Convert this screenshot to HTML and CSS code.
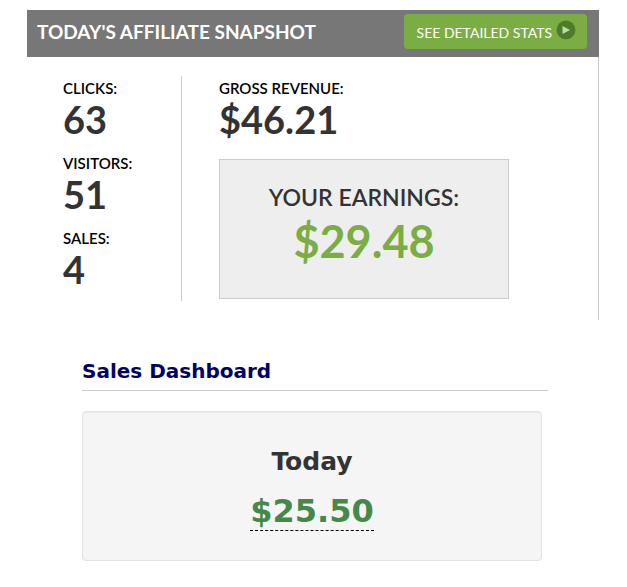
FILE: index.html
```html
<!DOCTYPE html>
<html lang="en">
<head>
  <meta charset="UTF-8" />
  <meta name="viewport" content="width=device-width, initial-scale=1.0"/>
  <title>Affiliate Snapshot</title>
  <link rel="stylesheet" href="styles.css">
</head>
<body>
  <div class="snapshot">
    <div class="snapshot-header">
      <h1>TODAY'S AFFILIATE SNAPSHOT</h1>
      <a href="#" class="stats-btn">
        <span>SEE DETAILED STATS</span>
        <svg class="play" width="20" height="20" viewBox="0 0 20 20" aria-hidden="true">
          <circle cx="10" cy="10.8" r="9" fill="#95be6c"/>
          <circle cx="10" cy="10" r="9.4" fill="#4e7a29"/>
          <path d="M6.5 6v8l7.5-4z" fill="#bfdca0"/>
        </svg>
      </a>
    </div>
    <div class="snapshot-body">
      <div class="counts">
        <div class="stat"><span class="label">CLICKS:</span><span class="value">63</span></div>
        <div class="stat"><span class="label">VISITORS:</span><span class="value">51</span></div>
        <div class="stat"><span class="label">SALES:</span><span class="value">4</span></div>
      </div>
      <div class="revenue">
        <div class="stat"><span class="label">GROSS REVENUE:</span><span class="value">$46.21</span></div>
        <div class="earnings">
          <h2>YOUR EARNINGS:</h2>
          <p>$29.48</p>
        </div>
      </div>
    </div>
  </div>

  <div class="sales">
    <h2 class="sales-title">Sales Dashboard</h2>
    <div class="well">
      <h3>Today</h3>
      <span class="total">$25.50</span>
    </div>
  </div>
</body>
</html>
```
FILE: styles.css
```css
* {
  box-sizing: border-box;
}
body {
  font-family: Lato, sans-serif;
  margin: 0;
  padding: 10px 28px 26px 27px;
  background: #fff;
  color: #333;
}
h1, h2, h3, p {
  margin: 0;
}
.snapshot-header {
  display: flex;
  justify-content: space-between;
  align-items: flex-start;
  padding: 4px 12px 7px 10px;
  background: #777;
}
h1 {
  font-size: 19px;
  line-height: 36px;
  font-weight: 700;
  color: #fff;
}
.stats-btn {
  display: flex;
  gap: 4px;
  padding: 0 11px 0 13px;
  font-size: 14px;
  line-height: 38px;
  height: 35px;
  border-radius: 4px;
  background: #7aad44;
  color: #fff;
  text-decoration: none;
}
.play {
  margin-top: 6px;
}
.snapshot-body {
  display: flex;
  padding: 19px 89px 19px 36px;
  border-right: 1px solid #ccc;
}
.counts {
  width: 119px;
  border-right: 1px solid #ccc;
}
.stat {
  height: 75px;
}
.label {
  display: block;
  font-size: 15px;
  line-height: 24px;
  font-weight: 600;
  color: #000;
}
.value {
  display: block;
  font-size: 38px;
  line-height: 38px;
  font-weight: 700;
}
.revenue {
  flex: 1;
  padding-left: 37px;
}
.earnings {
  margin-top: 8px;
  padding: 21px 0 29px;
  border: 1px solid #ccc;
  background: #eee;
  text-align: center;
}
.earnings h2 {
  font-size: 23px;
  line-height: 32px;
  font-weight: 600;
}
.earnings p {
  font-size: 45px;
  line-height: 56px;
  font-weight: 700;
  color: #7aad44;
}
.sales {
  margin: 39px 51px 0 55px;
  font-family: Verdana, "DejaVu Sans", sans-serif;
}
.sales-title {
  padding-bottom: 7px;
  border-bottom: 1px solid #ccc;
  font-size: 20px;
  line-height: 24px;
  color: #006;
}
.well {
  margin: 20px 6px 0 0;
  padding: 34px 0 29px;
  border: 1px solid #e3e3e3;
  border-radius: 4px;
  background: #f5f5f5;
  box-shadow: inset 0 1px 1px rgba(0, 0, 0, 0.05);
  text-align: center;
}
.well h3 {
  font-size: 25px;
  line-height: 32px;
}
.total {
  display: inline-block;
  margin-top: 14px;
  border-bottom: 1px dashed #000;
  font-size: 32px;
  line-height: 38px;
  font-weight: 700;
  color: #468847;
}
```
